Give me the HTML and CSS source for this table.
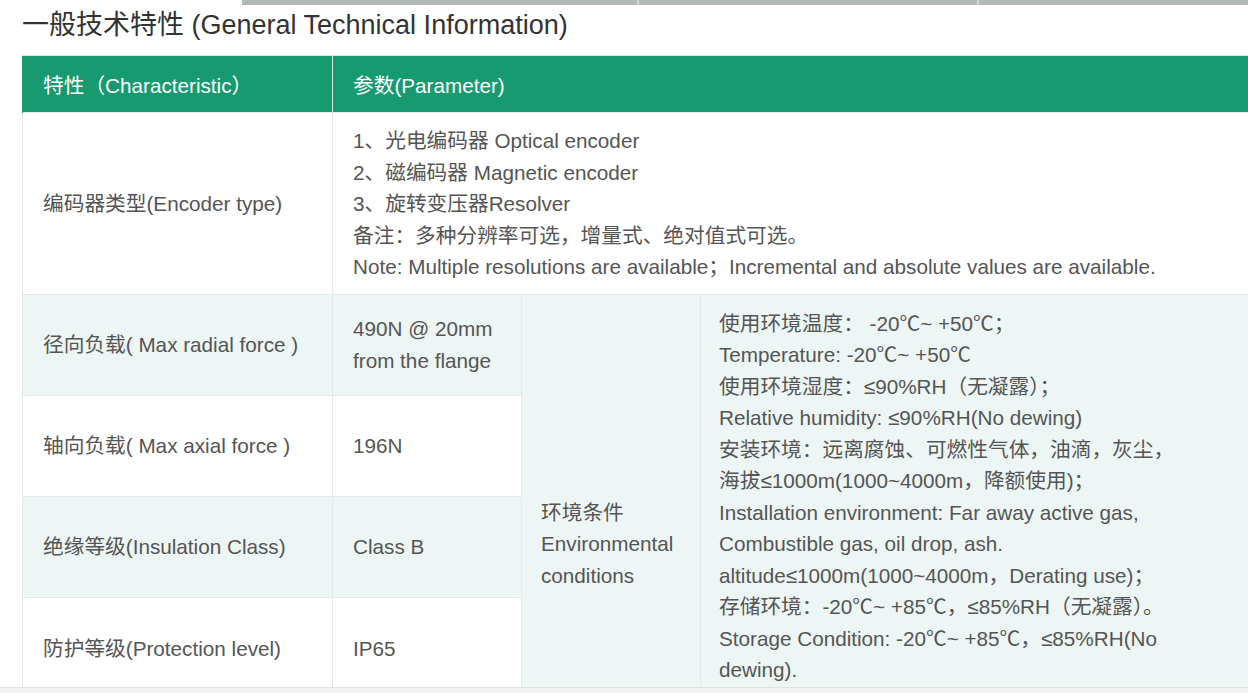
FILE: index.html
```html
<!DOCTYPE html>
<html>
<head>
  <meta charset="utf-8">
  <title>一般技术特性</title>
  <link rel="stylesheet" href="styles.css">
</head>
<body>
  <div class="tabs-edge"><span class="seg-a"></span><span class="seg-b"></span><span class="seg-c"></span></div>

  <h1 class="spec-title">一般技术特性 (General Technical Information)</h1>

  <table class="spec">
    <colgroup>
      <col class="c-name">
      <col class="c-value">
      <col class="c-env">
      <col class="c-detail">
    </colgroup>
    <thead>
      <tr>
        <th>特性（Characteristic）</th>
        <th colspan="3">参数(Parameter)</th>
      </tr>
    </thead>
    <tbody>
      <tr class="tall">
        <td>编码器类型(Encoder type)</td>
        <td colspan="3" class="types">
          1、光电编码器 Optical encoder<br>
          2、磁编码器 Magnetic encoder<br>
          3、旋转变压器Resolver<br>
          备注：多种分辨率可选，增量式、绝对值式可选。<br>
          Note: Multiple resolutions are available；Incremental and absolute values are available.
        </td>
      </tr>
      <tr>
        <td>径向负载( Max radial force )</td>
        <td>490N @ 20mm from the flange</td>
        <td rowspan="4" class="env">环境条件<br>Environmental conditions</td>
        <td rowspan="4" class="detail">
          使用环境温度： -20℃~ +50℃；<br>
          Temperature: -20℃~ +50℃<br>
          使用环境湿度：≤90%RH（无凝露）；<br>
          Relative humidity: ≤90%RH(No dewing)<br>
          安装环境：远离腐蚀、可燃性气体，油滴，灰尘，<br>
          海拔≤1000m(1000~4000m，降额使用)；<br>
          Installation environment: Far away active gas,<br>
          Combustible gas, oil drop, ash.<br>
          altitude≤1000m(1000~4000m，Derating use)；<br>
          存储环境：-20℃~ +85℃，≤85%RH（无凝露）。<br>
          Storage Condition: -20℃~ +85℃，≤85%RH(No<br>
          dewing).
        </td>
      </tr>
      <tr>
        <td>轴向负载( Max axial force )</td>
        <td>196N</td>
      </tr>
      <tr>
        <td>绝缘等级(Insulation Class)</td>
        <td>Class B</td>
      </tr>
      <tr>
        <td>防护等级(Protection level)</td>
        <td>IP65</td>
      </tr>
    </tbody>
  </table>

  <div class="scroll-edge"></div>
</body>
</html>
```

FILE: styles.css
```css
html { overflow: hidden; height: 693px; }

body {
  margin: 0;
  height: 693px;
  overflow: hidden;
  background: #fff;
  color: #555;
  font-family: "Liberation Sans", "Noto Sans CJK SC", sans-serif;
}

.tabs-edge { display: flex; gap: 2px; height: 5px; margin-left: 242px; background: #d3d8d8; }
.tabs-edge span { background: #b2b8b8; }
.tabs-edge .seg-a { width: 395px; }
.tabs-edge .seg-b { width: 338px; }
.tabs-edge .seg-c { flex: 1; }

.spec-title {
  margin: 0 0 10px 22px;
  font-size: 27px;
  line-height: 40px;
  font-weight: normal;
  color: #333;
}

table.spec {
  margin-left: 22px;
  width: 1300px;
  table-layout: fixed;
  border-collapse: collapse;
  font-size: 20.7px;
  line-height: 31.5px;
}
col.c-name   { width: 310px; }
col.c-value  { width: 189px; }
col.c-env    { width: 179px; }
col.c-detail { width: 622px; }

table.spec th {
  height: 52px;
  padding: 4px 20px 0;
  background: #179a70;
  color: #fff;
  font-weight: normal;
  text-align: left;
  border-top: 1px solid #dfe3e3;
  border-left: 1px solid #d7eee6;
}
table.spec th:first-child { border-left: 1px solid #179a70; }

table.spec td {
  padding: 13px 20px;
  border: 1px solid #e4e9e9;
  vertical-align: middle;
}
table.spec tbody tr { height: 100px; }
table.spec tbody tr:nth-child(even) { background: #edf6f4; }

table.spec tr.tall td { padding-top: 12px; padding-bottom: 11px; }
table.spec td.types { white-space: nowrap; }
table.spec td.env { vertical-align: top; padding-top: 202px; padding-left: 19px; }
table.spec td.detail { white-space: nowrap; padding-left: 18px; }

.scroll-edge {
  position: fixed;
  left: 0;
  right: 0;
  bottom: 0;
  height: 5px;
  background: #f1f1f1;
  border-top: 1px solid #e1e1e1;
}
```
